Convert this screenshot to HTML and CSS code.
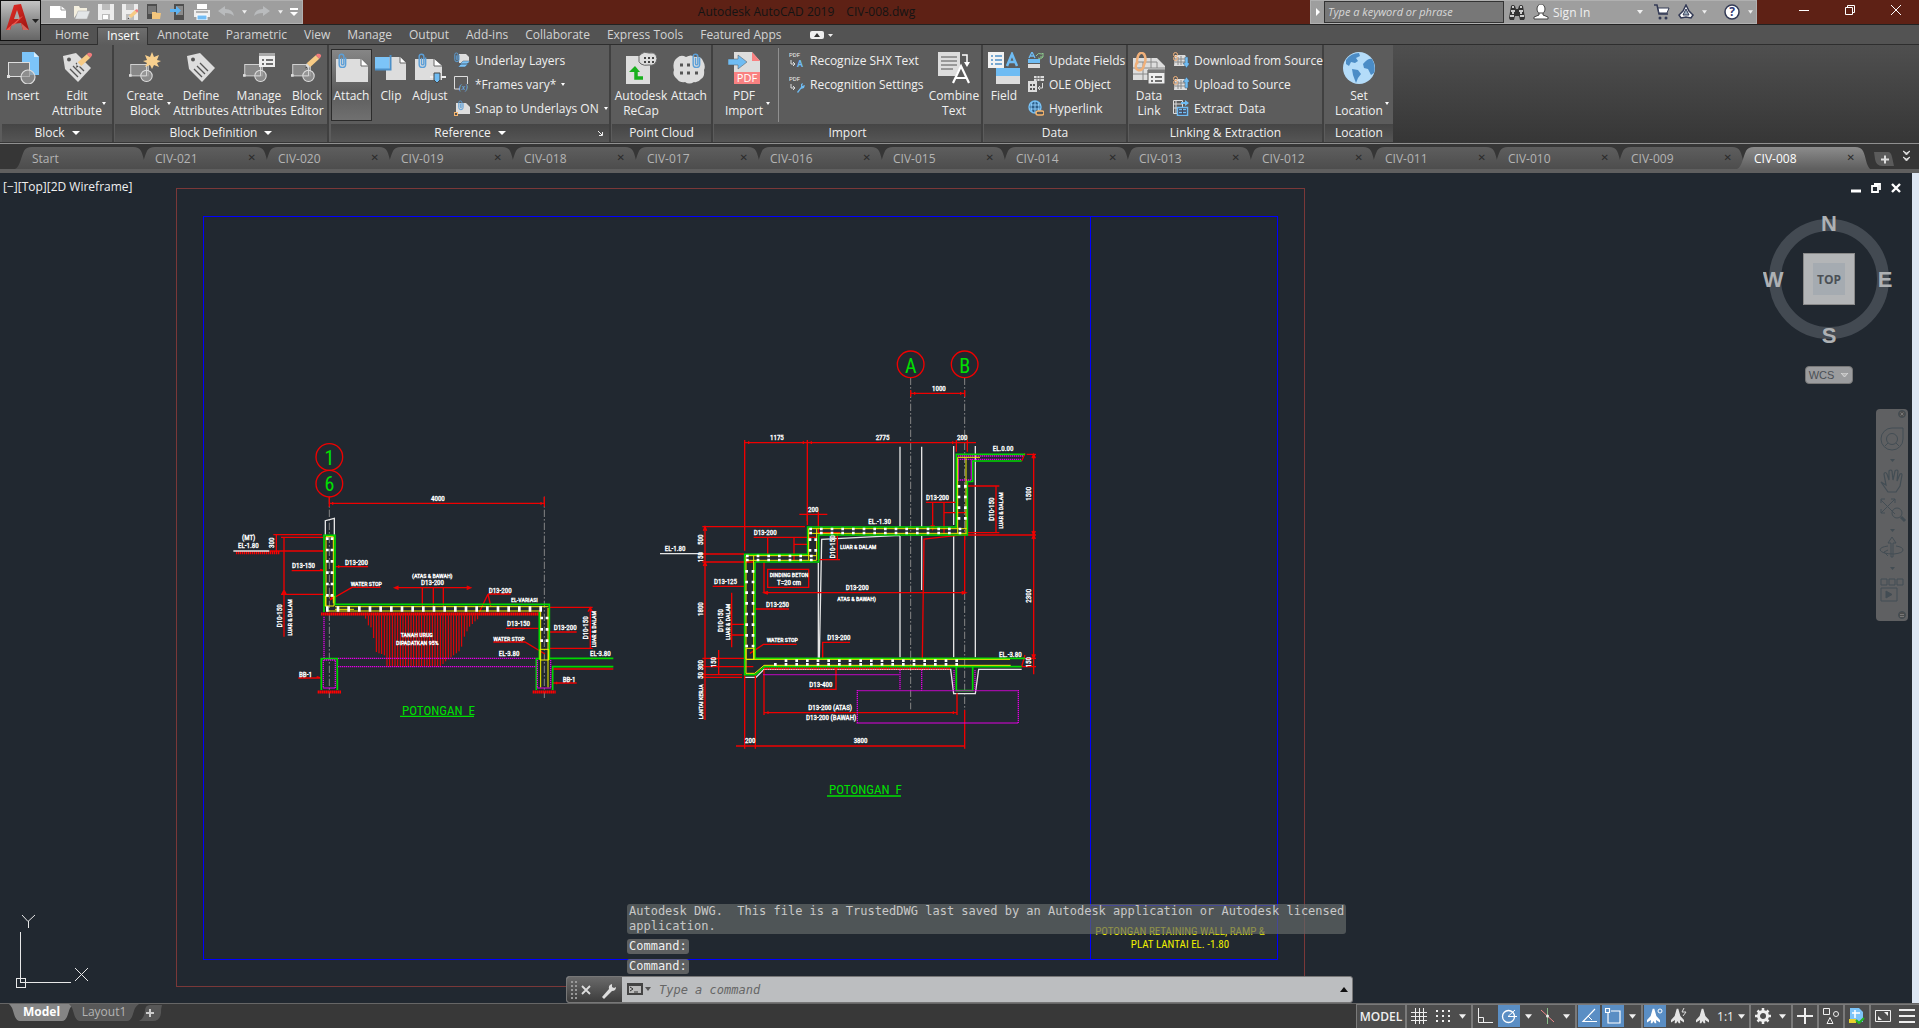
FILE: index.html
```html
<!DOCTYPE html>
<html lang="en">
<head>
<meta charset="utf-8">
<title>Autodesk AutoCAD 2019 - CIV-008.dwg</title>
<link rel="stylesheet" href="styles.css">
</head>
<body>
<svg class="defs" aria-hidden="true">
  <defs>
    <linearGradient id="g-red" x1="0" y1="0" x2="1" y2="1"><stop offset="0" stop-color="#e8302a"/><stop offset="1" stop-color="#9c1410"/></linearGradient>
    <symbol id="clip" viewBox="0 0 10 18"><path d="M8.500 5v7.500a3.600 3.600 0 0 1-7.200 0V4a2.600 2.600 0 0 1 5.200 0v8a1.300 1.300 0 0 1-2.600 0V5.500" fill="none" stroke="#5b9fd8" stroke-width="1.600"/></symbol>
    <symbol id="blk" viewBox="0 0 32 32"><rect x="2" y="12" width="20" height="13" fill="#888" stroke="#ddd"/><rect y="23" width="3" height="3" fill="#ddd"/><circle cx="20" cy="25" r="6.500" fill="#999" fill-opacity=".8" stroke="#ddd" stroke-width="1.200"/><path d="M20 12v13h-6" fill="none" stroke="#ddd"/></symbol>
    <symbol id="pencil" viewBox="0 0 20 18"><path d="M1 17l2-6 4 4z" fill="#ddd"/><path d="M3 11L13 2l4 4L7 15z" fill="#f7cb85"/><path d="M13 2l2-1.500q3-.5 4 1.500.5 1.500-2 4z" fill="#f17c7c"/><path d="M1 17l1-3 2 2z" fill="#444"/></symbol>
    <symbol id="tag" viewBox="0 0 32 32"><path d="M2 4l13-3 15 15-13 14L4 17z" fill="#ddd"/><circle cx="8" cy="7.500" r="2" fill="#555"/><path d="M9 17l8 8M12 14l8 8M15 11l8 8" stroke="#555" stroke-width="1.300"/></symbol>
    <symbol id="caret" viewBox="0 0 6 4"><path d="M0 0h6L3 4z" fill="currentColor"/></symbol>
    <symbol id="tree" viewBox="0 0 16 18"><path d="M7 0h2l2.500 9L16 14v3l-5-3 .5 4H9.500L8 15l-1.500 3H4.500L5 14l-5 3v-3l4.500-5z" fill="#fff"/></symbol>
  </defs>
</svg>

<header class="titlebar">
  <button class="app-button" aria-label="Application menu">
    <svg width="40" height="40" viewBox="0 0 40 40"><path d="M5 29L13 4l7-1 8 26h-6l-2-7-9 1-2 6z" fill="url(#g-red)"/><path d="M13 18l3-9 3 9z" fill="#a9a9a9"/><path d="M5 29l15-13 2-1-9 9-3 1-1 4z" fill="#f0594f"/><path d="M20 22l8 7h-6z" fill="#d2655c"/><path d="M31 18h7l-3.500 4z" fill="#222"/></svg>
  </button>
  <div class="quick">
    <button class="q" aria-label="New"><svg width="16" height="16"><path d="M0 2h11l5 4v8H0z" fill="#fff"/><path d="M11 2v4h5" fill="none" stroke="#999"/></svg></button>
    <button class="q" aria-label="Open"><svg width="16" height="16"><path d="M0 14V2h5l1 2h7v3H5z" fill="#f4efdf"/><path d="M4 7h12l-3 8H1z" fill="#e3e6e8" stroke="#aaa" stroke-width=".5"/></svg></button>
    <button class="q" aria-label="Save"><svg width="16" height="16"><path d="M0 0h16v16H0z" fill="#ececec"/><path d="M4 0h8v6H4zM4 10h8v6H4z" fill="#bcbcbc"/><path d="M5 11h5v4H5z" fill="#fff"/></svg></button>
    <button class="q" aria-label="Save as"><svg width="16" height="16"><path d="M0 0h16v16H0z" fill="#ececec"/><path d="M4 0h8v6H4zM4 10h8v6H4z" fill="#bcbcbc"/><use href="#pencil" x="5" y="5" width="12" height="11"/></svg></button>
    <button class="q" aria-label="Open from mobile"><svg width="16" height="16"><rect x="1" width="10" height="15" fill="#4e4e4e"/><path d="M2 2h8v8H2z" fill="#777"/><path d="M6 15V8h4l1 1h4l-1 6z" fill="#f3c57c"/></svg></button>
    <button class="q" aria-label="Save to mobile"><svg width="16" height="16"><rect x="4" width="10" height="16" fill="#4e4e4e"/><path d="M6 2h7v9H6z" fill="#8a8a8a"/><path d="M0 5h6V2l5 4.500L6 11V8H0z" fill="#5cb4f4"/></svg></button>
    <button class="q" aria-label="Plot"><svg width="16" height="16"><path d="M3 0h10v5H3z" fill="#fff"/><path d="M0 6h16v7H0z" fill="#eee"/><path d="M2 8h12" stroke="#777"/><path d="M3 11h10v5H3z" fill="#73bdf5" stroke="#fff"/></svg></button>
    <button class="q" aria-label="Undo"><svg width="16" height="16"><path d="M0 7l7-5v3q8 0 9 7-3-3-9-3v3z" fill="#b9bbbd"/></svg></button>
    <button class="c" aria-label="Undo list"><svg width="5" height="4"><use href="#caret" width="5" height="4"/></svg></button>
    <button class="q" aria-label="Redo"><svg width="16" height="16"><path d="M16 7L9 2v3Q1 5 0 12q3-3 9-3v3z" fill="#b9bbbd"/></svg></button>
    <button class="c" aria-label="Redo list"><svg width="5" height="4"><use href="#caret" width="5" height="4"/></svg></button>
    <button class="c last" aria-label="Customize"><svg width="8" height="8"><path d="M0 0h8v2H0zM0 4h8L4 8z" fill="#fff"/></svg></button>
  </div>
  <div class="title"><span>Autodesk AutoCAD 2019</span><span>CIV-008.dwg</span></div>
  <div class="info">
    <button class="info-arrow" aria-label="Collapse search"><svg width="4" height="8"><path d="M0 0l4 4-4 4z" fill="#fff"/></svg></button>
    <input class="search" type="text" placeholder="Type a keyword or phrase" aria-label="Search">
    <button class="q" aria-label="Find"><svg width="16" height="16"><path d="M2 2q2-2 4 0l1 3h2l1-3q2-2 4 0l2 12-1 2h-4l-1-4H6l-1 4H1l-1-2z" fill="#333"/><path d="M3 3h2M2 7h4M1 12h4M11 3h2M10 7h4M11 12h4M3 9h2M11 9h2" stroke="#fff" stroke-width="1.500"/></svg></button>
    <button class="q" aria-label="Account"><svg width="16" height="16"><ellipse cx="8" cy="5" rx="4" ry="5" fill="#fff" stroke="#444"/><path d="M6 9h4v2l5 2v2H1v-2l5-2z" fill="#fff" stroke="#444"/></svg></button>
    <button class="signin">Sign In <svg width="6" height="4"><use href="#caret" width="6" height="4"/></svg></button>
    <button class="q" aria-label="App store"><svg width="16" height="16"><path d="M0 1h3l2 9h9" fill="none" stroke="#333a55" stroke-width="1.500"/><path d="M4 4h11l-2 5H5z" fill="#fff" stroke="#333a55"/><circle cx="6" cy="14" r="1.500" fill="#333a55"/><circle cx="12" cy="14" r="1.500" fill="#333a55"/></svg></button>
    <button class="q" aria-label="Autodesk A360"><svg width="16" height="16"><path d="M8 1l3 6 4 4-2 3-5-1-5 1-2-3 4-4z" fill="#fff" stroke="#333a55" stroke-width="1.500"/><path d="M8 5l3 6H5z" fill="#9ab" stroke="#333a55"/></svg></button>
    <button class="c" aria-label="A360 list"><svg width="5" height="4"><use href="#caret" width="5" height="4"/></svg></button>
    <button class="q help" aria-label="Help"><svg width="16" height="16"><circle cx="8" cy="8" r="7" fill="#fff" stroke="#333a55" stroke-width="1.500"/><text x="8" y="12" text-anchor="middle" class="help-mark">?</text></svg></button>
    <button class="c" aria-label="Help list"><svg width="5" height="4"><use href="#caret" width="5" height="4"/></svg></button>
  </div>
  <div class="win">
    <button aria-label="Minimize"><svg width="10" height="10"><path d="M0 5.500h10" stroke="#fff"/></svg></button>
    <button aria-label="Restore"><svg width="10" height="10"><path d="M.5 2.500h7v7h-7zM2.500 2.500v-2h7v7h-2" fill="none" stroke="#fff"/></svg></button>
    <button aria-label="Close"><svg width="10" height="10"><path d="M0 0l10 10M10 0L0 10" stroke="#fff"/></svg></button>
  </div>
</header>

<nav class="menu">
  <a href="#home">Home</a><a href="#insert" class="active">Insert</a><a href="#annotate">Annotate</a><a href="#parametric">Parametric</a><a href="#view">View</a><a href="#manage">Manage</a><a href="#output">Output</a><a href="#addins">Add-ins</a><a href="#collaborate">Collaborate</a><a href="#express">Express Tools</a><a href="#featured">Featured Apps</a>
  <button class="menu-toggle" aria-label="Minimize ribbon"><svg width="23" height="8"><rect width="14" height="8" rx="2" fill="#eee"/><path d="M4 6h6L7 2z" fill="#333"/><path d="M18 3h5l-2.500 3z" fill="#eee"/></svg></button>
</nav>

<main class="ribbon">
  <section class="panel p-block">
    <div class="tools">
      <button class="big w42"><svg width="32" height="32"><path d="M15 0h12l5 5v18H15z" fill="#7cc4f8"/><path d="M27 0v5h5" fill="#d8eefc"/><rect x="1.500" y="10.500" width="21" height="14" fill="#777" stroke="#ddd"/><rect y="23" width="3" height="3" fill="#ddd"/><circle cx="21" cy="25" r="7" fill="#999" stroke="#ddd" stroke-width="1.200" fill-opacity=".7"/></svg><span>Insert</span></button>
      <button class="big w66"><svg width="32" height="32"><use href="#tag" width="32" height="32"/><use href="#pencil" x="14" y="0" width="18" height="17"/></svg><span>Edit<br>Attribute</span><i class="drop"></i></button>
    </div>
    <h2>Block <i class="tri"></i></h2>
  </section>
  <section class="panel p-def">
    <div class="tools">
      <button class="big w60"><svg width="32" height="32"><use href="#blk" width="28" height="32"/><path d="M23 0l2 5 5-2-2 5 4 1-4 2 2 4-5-2-2 4-2-4-5 2 2-4-4-2 4-1-2-5 5 2z" fill="#f8d08e"/></svg><span>Create<br>Block</span><i class="drop"></i></button>
      <button class="big w52"><svg width="32" height="32"><use href="#tag" width="32" height="32"/></svg><span>Define<br>Attributes</span></button>
      <button class="big w64"><svg width="32" height="32"><use href="#blk" width="28" height="32"/><path d="M16 1h16v14H16z" fill="#eee"/><path d="M16 1h16v3H16z" fill="#a8a8a8"/><path d="M19 8h2M23 8h7M19 12h2M23 12h7" stroke="#444" stroke-width="1.500"/></svg><span>Manage<br>Attributes</span></button>
      <button class="big w32"><svg width="32" height="32"><use href="#blk" width="28" height="32"/><use href="#pencil" x="13" y="1" width="18" height="17"/></svg><span>Block<br>Editor</span></button>
    </div>
    <h2>Block Definition <i class="tri"></i></h2>
  </section>
  <section class="panel p-ref">
    <div class="tools">
      <button class="big w41 pressed"><svg width="32" height="32"><path d="M0 7h25l7 7v16H0z" fill="#ddd"/><path d="M25 7v7h7" fill="#fff" stroke="#666"/><use href="#clip" x="2" y="0" width="9" height="18"/></svg><span>Attach</span></button>
      <button class="big w38"><svg width="32" height="32"><path d="M11 5h14l6 6v17H11z" fill="#ddd"/><path d="M25 5v6h6" fill="#fff" stroke="#666"/><path d="M0 5h14v12H0z" fill="#7cc4f8"/><path d="M0 17.500h15.500V3" fill="none" stroke="#4c90c8" stroke-width="2"/></svg><span>Clip</span></button>
      <button class="big w40"><svg width="32" height="32"><path d="M1 7h19l8 7v14H1z" fill="#ddd"/><path d="M20 7v7h8" fill="#fff" stroke="#666"/><use href="#clip" x="4" y="0" width="9" height="18"/><path d="M16 25h16" stroke="#eee" stroke-width="2"/><path d="M20 21h6v7l-3 3-3-3z" fill="#6fbcf3" stroke="#444"/></svg><span>Adjust</span></button>
      <div class="list pad4">
        <button><svg width="16" height="16"><path d="M5 2h7l3 3v6H5z" fill="#ddd"/><use href="#clip" width="6" height="11"/><path d="M6 12l3-3h7l-3 3zM4 15l3-3h7l-3 3z" fill="#7cc4f8" stroke="#456" stroke-width=".5"/></svg>Underlay Layers</button>
        <button><svg width="16" height="16"><path d="M.5 13V.5h13V8M.5 13H6" fill="none" stroke="#ddd"/><text x="5" y="14" class="ic-x">(x)</text></svg>*Frames vary* <i class="drop"></i></button>
        <button><svg width="16" height="16"><path d="M2 3h10l4 4v7H2z" fill="#ddd"/><use href="#clip" x="4" y="0" width="6" height="11"/><rect x=".5" y="12.500" width="3" height="3" fill="#555" stroke="#f7b56c"/></svg>Snap to Underlays ON <i class="drop"></i></button>
      </div>
    </div>
    <h2>Reference <i class="tri"></i><svg class="launcher" width="5" height="5"><path d="M0 0l4 4M4.500 1v3.500H1" fill="none" stroke="#eee"/></svg></h2>
  </section>
  <section class="panel p-pc">
    <div class="tools">
      <button class="big w58"><svg width="32" height="32"><path d="M1 4h24v28H1z" fill="#ddd"/><path d="M16 2q3-3 8-1 5-1 7 2 2 4 0 7-2 4-7 3-5 1-8-1-3-2-2-5-1-3 2-5z" fill="#ddd" stroke="#666"/><path d="M19 6h2M23 6h2M27 6h2M19 10h2M23 10h2M27 10h2" stroke="#444" stroke-width="2"/><path d="M18 26h-7v-8" fill="none" stroke="#18b01c" stroke-width="3.500"/><path d="M4 20l6-6 5 6z" fill="#18b01c"/></svg><span>Autodesk<br>ReCap</span></button>
      <button class="big w38"><svg width="32" height="32"><path d="M4 6q4-4 9-1 5-3 9 0 6-1 8 4 3 5 1 9 1 7-3 9-3 4-7 3-5 3-9 0-5 1-8-3-5-4-3-9-2-8 3-12z" fill="#ddd"/><path d="M7 13h3M14 13h3M7 21h3M14 21h3M22 21h3" stroke="#555" stroke-width="3"/><use href="#clip" x="19" y="0" width="9" height="18"/></svg><span>Attach</span></button>
    </div>
    <h2>Point Cloud</h2>
  </section>
  <section class="panel p-imp">
    <div class="tools">
      <button class="big w60"><svg width="32" height="32"><path d="M6 0h18l8 9v12H6z" fill="#ddd"/><path d="M24 0v9h8z" fill="#f98181"/><path d="M6 20h26v12H6z" fill="#f98181"/><text x="19" y="30" text-anchor="middle" class="ic-pdf">PDF</text><path d="M0 7h10V3l9 7-9 7v-4H0z" fill="#6fbcf3" stroke="#555" stroke-width=".5"/></svg><span>PDF<br>Import</span><i class="drop"></i></button>
      <div class="rule"></div>
      <div class="list">
        <button><svg width="16" height="18" viewBox="0 -2 16 18"><text x="0" y="4" class="ic-t">PDF</text><path d="M2 7v4h4M4 9l2 2-2 2" fill="none" stroke="#ddd"/><text x="8" y="14" class="ic-a">A</text></svg>Recognize SHX Text</button>
        <button><svg width="16" height="18" viewBox="0 -2 16 18"><text x="0" y="4" class="ic-t">PDF</text><path d="M2 7v4h4M4 9l2 2-2 2" fill="none" stroke="#ddd"/><path d="M8 15l4-5V7l2-1-1 3 3-1-1 3-3 1-3 4z" fill="#6fbcf3"/></svg>Recognition Settings</button>
      </div>
      <button class="big w54 end"><svg width="32" height="32"><path d="M0 0h22v24H0z" fill="#ddd"/><path d="M3 5h16M3 9h16M3 13h16M3 17h12" stroke="#555"/><path d="M24 3h5v8" fill="none" stroke="#fff" stroke-width="1.500"/><path d="M26 10h6l-3 5z" fill="#fff"/><path d="M13 33l10-20 10 20v-1H13z" fill="#5c5c5c"/><path d="M15 31l8-17 8 17M18 26h10" fill="none" stroke="#fff" stroke-width="2.200"/></svg><span>Combine<br>Text</span></button>
    </div>
    <h2>Import</h2>
  </section>
  <section class="panel p-data">
    <div class="tools">
      <button class="big w40"><svg width="32" height="32"><path d="M0 0h16v16H0z" fill="#f2f2f2"/><path d="M3 4h2M3 8h2M3 12h2M7 4h7M7 8h7M7 12h7" stroke="#4d90c8" stroke-width="1.500"/><path d="M8 16h24v8H8z" fill="#6fbcf3"/><path d="M8 24h24v8H8z" fill="#ddd"/><path d="M19 14l5-12 5 12M21 10h7" fill="none" stroke="#6fbcf3" stroke-width="2.500"/></svg><span>Field</span></button>
      <div class="list pad4">
        <button><svg width="16" height="16"><path d="M0 7h12v4H0z" fill="#6fbcf3"/><path d="M0 12h12v4H0z" fill="#ddd"/><path d="M1 6l3-6 3 6M2 4h4" fill="none" stroke="#6fbcf3" stroke-width="1.300"/><path d="M8 4q2-4 6-2l1-1v4h-3M15 5q-2 3-5 1" fill="none" stroke="#8cc98c"/></svg>Update Fields</button>
        <button><svg width="16" height="16"><path d="M0 5h9v11H0zM6 0h10v5H6z" fill="#ddd"/><path d="M2 8h2v2H2zM5 8h2v2H5zM2 12h2v2H2zM5 12h2v2H5z" fill="#555"/><path d="M6 2.500h10M9 0v5M12 0v5" stroke="#777"/><path d="M14.500 7v5H11M12 10l-2 2 2 2" fill="none" stroke="#ddd"/></svg>OLE Object</button>
        <button><svg width="16" height="16"><circle cx="7" cy="7" r="6" fill="#2c5d88" stroke="#6fbcf3" stroke-width="1.500"/><path d="M1 5h12M1 9h12M7 1v12M4 2q-2 5 0 10M10 2q2 5 0 10" fill="none" stroke="#8ccbf8"/><rect x="8" y="11" width="8" height="4" rx="2" fill="#555" stroke="#f7b56c" stroke-width="1.500"/></svg>Hyperlink</button>
      </div>
    </div>
    <h2>Data</h2>
  </section>
  <section class="panel p-link">
    <div class="tools">
      <button class="big w40"><svg width="32" height="32"><path d="M0 6h24l8 8v14H0z" fill="#ddd"/><path d="M4 10h20M0 16h32M0 22h16M10 10v18M18 6v10M24 10v6" stroke="#888"/><path d="M15 18h17v14H15z" fill="#eee" stroke="#555"/><path d="M15 18h17v3H15z" fill="#777"/><path d="M18 25h2M22 25h7M18 29h2M22 29h7" stroke="#444" stroke-width="1.500"/><path d="M4 10q-3 6 1 8 5 1 6-5 3-6 0-11-4-3-6 2-2 6 0 8" fill="none" stroke="#f0b07a" stroke-width="2.500"/></svg><span>Data<br>Link</span></button>
      <div class="list pad4">
        <button><svg width="16" height="16"><path d="M2 3h10l2 3v8H1z" fill="#ddd"/><path d="M2 7h10M2 10h10M5 5v8M8 4v9" stroke="#888"/><circle cx="2.500" cy="2.500" r="2" fill="none" stroke="#f0b07a"/><circle cx="2.500" cy="6.500" r="2" fill="none" stroke="#f0b07a"/><path d="M12 5h3v6h2l-3.500 5L10 11h2z" fill="#6fbcf3" stroke="#456" stroke-width=".5"/></svg>Download from Source</button>
        <button><svg width="16" height="16"><path d="M2 3h10l2 3v8H1z" fill="#ddd"/><path d="M2 7h10M2 10h10M5 5v8M8 4v9" stroke="#888"/><circle cx="2.500" cy="2.500" r="2" fill="none" stroke="#f0b07a"/><circle cx="2.500" cy="6.500" r="2" fill="none" stroke="#f0b07a"/><path d="M12 12h3V6h2l-3.500-5L10 6h2z" fill="#6fbcf3" stroke="#456" stroke-width=".5"/></svg>Upload to Source</button>
        <button><svg width="16" height="16"><path d="M.5.500h9v13h-9z" fill="none" stroke="#ddd"/><path d="M0 4h9M0 8h5M3 0v14" stroke="#ddd"/><path d="M8 2h4V0l4 3-4 3V4H8z" fill="#6fbcf3"/><path d="M4.500 7.500h10v8h-10z" fill="#445" stroke="#6fbcf3" stroke-width="1.500"/><path d="M6 9.500h7M6 12.500h7" stroke="#6fbcf3" stroke-width="1.500" stroke-dasharray="3 1"/></svg>Extract&nbsp; Data</button>
      </div>
    </div>
    <h2>Linking &amp; Extraction</h2>
  </section>
  <section class="panel p-loc">
    <div class="tools">
      <button class="big w68"><svg width="32" height="32"><circle cx="16" cy="16" r="16" fill="#b4dcf9"/><path d="M3 8q5-7 13-7l1 3-4 2 2 3-3 2-4-1-2 4-3-2zM20 12q5-6 9-5 4 6 2 14l-3 2-3-6-4-1zM9 17l6 1 3 4-3 4-2 5-3-8z" fill="#4b8cc6"/></svg><span>Set<br>Location</span><i class="drop"></i></button>
    </div>
    <h2>Location</h2>
  </section>
</main>

<nav class="files">
  <a href="#start" class="first">Start</a>
  <a href="#f21">CIV-021<b>✕</b></a><a href="#f20">CIV-020<b>✕</b></a><a href="#f19">CIV-019<b>✕</b></a><a href="#f18">CIV-018<b>✕</b></a><a href="#f17">CIV-017<b>✕</b></a><a href="#f16">CIV-016<b>✕</b></a><a href="#f15">CIV-015<b>✕</b></a><a href="#f14">CIV-014<b>✕</b></a><a href="#f13">CIV-013<b>✕</b></a><a href="#f12">CIV-012<b>✕</b></a><a href="#f11">CIV-011<b>✕</b></a><a href="#f10">CIV-010<b>✕</b></a><a href="#f09">CIV-009<b>✕</b></a><a href="#f08" class="current">CIV-008<b>✕</b></a>
  <button class="new-file" aria-label="New drawing"><svg width="20" height="14"><path d="M0 0h14q3 0 4 5l2 9H8q-6 0-7-7z" fill="#5b5b5b"/><path d="M7 7.500h8M11 3.500v8" stroke="#ddd" stroke-width="2"/></svg></button>
  <button class="overflow" aria-label="More drawings"><svg width="7" height="12"><path d="M0 1l3.500 2L7 1 3.500 5zM0 7l3.500 2L7 7l-3.500 4z" fill="#ddd" stroke="#ddd"/></svg></button>
</nav>

<div class="workspace">
  <div class="viewport">
    <svg class="drawing" width="1912" height="830" viewBox="0 173 1912 830">
      <g fill="none" shape-rendering="crispEdges">
        <rect x="176.500" y="188.500" width="1128" height="798" stroke="#7a3838"/>
        <path d="M203.500 216.500h1074v743h-1074zM1090.500 216v743M1090 905.500h188" stroke="#0000ff"/>
      </g>
      <g class="sheet-title"><text x="1180" y="935">POTONGAN RETAINING WALL, RAMP &amp;</text><text x="1180" y="948">PLAT LANTAI EL. -1.80</text></g>
      <g fill="none" stroke="#e8e8e8"><path d="M20.500 932v50.500H71M16.500 978.500h9v9h-9z" shape-rendering="crispEdges"/><path d="M22 915l6 6.500 7-6.500M28.500 921v7M75 968l13 13M88 968l-13 13"/></g>

      <svg x="220" y="430" width="400" height="300" viewBox="0 0 1200 900">
        <g class="gray"><path d="M328 200V804M973 200V804" stroke-dasharray="22 6 5 6"/></g>
        <g class="red">
          <circle cx="328" cy="81" r="40"/><circle cx="328" cy="161" r="40"/>
          <path d="M328 220H973M328 200v30M973 200v30M338 216v8M963 216v8"/>
          <path d="M160 314H306M169 314V362M150 363H310M183 322H310M192 322V620M183 493H312M192 480l-6 12h12z"/>
          <path d="M215 422H312M300 418l12 4M345 410H444M356 406v8M396 472H482M396 472L330 510M330 510l10-14"/>
          <path d="M524 473H752M536 468l-12 5 12 5M740 468l12 5-12 5M607 473V528M640 473V528M670 473V528M804 492H872M804 492L778 547M804 492L812 528"/>
          <path d="M988 532H1118M1111 532V656M988 655H1118M1104 545l7-12 6 12"/><path d="M858 595H955M990 606H1070M820 636H915L975 672"/>
          <path d="M235 744H302M290 740l12 4M998 759H1070M1010 755v8M998 717H1180"/>
        </g>
        <g fill="none" stroke="#f00"><path d="M48 368H180" stroke-width="10" stroke-dasharray="4 2"/><path d="M303 552H962M293 786H363M938 786H1007" stroke-width="9" stroke-dasharray="5 1"/>
        <path stroke-width="3" d="M437 556V566M445 556V586M453 556V592M461 556V624M469 556V666M477 556V670M485 556V672M493 556V676M501 556V710M509 556V710M517 556V710M525 556V710M533 556V710M541 556V710M549 556V710M557 556V710M565 556V710M573 556V710M581 556V710M589 556V710M597 556V710M605 556V710M613 556V710M621 556V710M629 556V710M637 556V710M645 556V710M653 556V710M661 556V710M669 556V702M677 556V694M685 556V688M693 556V682M701 556V676M709 556V670M717 556V664M725 556V650M733 556V620M741 556V604M749 556V590M757 556V582M765 556V574M773 556V568"/></g>
        <g class="white"><path d="M316 314V272L343 265V314M40 363H148"/></g>
        <g class="green"><path d="M312 546V316H345V523H988V690M958 546V684M304 780V686H352V780M949 780V686H962M1180 685H988M1180 710H998V780"/></g>
        <g class="mag"><path d="M312 560V684M354 685H946M354 710H946M310 690V774H346V690ZM952 690V774H992V690"/></g>
        <g class="yel"><path d="M318 320H340V520M318 320V530M316 498H342V528H316ZM320 543H960M345 530H985M345 538H402M962 534V772M984 534V772M960 658H986V690H960Z"/></g>
        <g class="bars"><path d="M322 322V500M336 322V500M965 560V650M981 560V650" stroke-dasharray="8 26"/><path d="M318 533H985M318 541H985" stroke-dasharray="8 24"/></g>
        <g class="cad"><text x="633" y="212">4000</text><text x="66" y="331">(MT)</text><text x="54" y="354">EL-1.80</text><text x="216" y="415">D13-150</text><text x="375" y="404">D13-200</text><text x="603" y="465">D13-200</text><text x="806" y="488">D13-200</text><text x="861" y="588">D13-150</text><text x="1001" y="600">D13-200</text><text x="836" y="679">EL-3.80</text><text x="1110" y="679">EL-3.80</text><text x="237" y="741">BB-1</text><text x="1028" y="755">BB-1</text>
        <text transform="translate(161 354) rotate(-90)">300</text><text transform="translate(186 592) rotate(-90)">D10-150</text><text transform="translate(1104 628) rotate(-90)">D10-150</text></g>
        <g class="cad words"><text x="392" y="467">WATER STOP</text><text x="576" y="443">(ATAS &amp; BAWAH)</text><text x="873" y="517">EL-VARIASI</text><text x="542" y="621">TANAH URUG</text><text x="528" y="645">DIPADATKAN 95%</text><text x="820" y="634">WATER STOP</text><text transform="translate(215 617) rotate(-90)">LUAR &amp; DALAM</text><text transform="translate(1129 652) rotate(-90)">LUAR &amp; DALAM</text></g>
        <g class="cad-title"><text x="546" y="854">POTONGAN&nbsp; E</text><path d="M540 859H762"/></g>
        <g class="axis"><text x="328" y="104">1</text><text x="328" y="184">6</text></g>
      </svg>

      <svg x="640" y="340" width="420" height="470" viewBox="0 0 1260 1410">
        <g class="gray"><path d="M812 113V1108M974 113V600M974 758V1110" stroke-dasharray="22 6 5 6"/></g>
        <g class="white"><path d="M780 320V560M845 320V560M941 318V555M780 588V952M845 588V750M941 588V952M1006 318V952M60 641H187M535 668V955M538 955L545 598L780 586M315 1012H348L372 988H932L941 1061H1006L1016 988H1145"/></g>
        <g class="red">
          <circle cx="812" cy="73" r="40"/><circle cx="974" cy="73" r="40"/>
          <path d="M812 160H974M812 150v20M974 150v20M824 156v8M962 156v8M314 308H1008M314 300V632M502 300V555M949 300V335M982 300V335M326 304v8M490 304v8M514 304v8M938 304v8"/>
          <path d="M1181 343V1003M1160 343H1188M984 585H1188M1150 955H1188M1145 980H1188M1176 355l5-12 5 12M1176 573l5 12 5-12M1176 597l5-12 5 12M1176 943l5 12 5-12"/>
          <path d="M1068 438V578M984 438H1078M984 578H1078M858 487H952M878 487V570M912 487V582M912 518H978M873 556l5 12 5-12M478 523H562M535 515V580M502 523v20"/>
          <path d="M195 560V1140M187 560H495M187 642H312M187 666H340M187 955H312M187 980H340M187 1004H306M187 1012H306M236 930V1003M190 572l5-12 5 12M190 678l5-12 5 12"/>
          <path d="M341 592H530M383 592V645M462 592V660M462 613H505M592 578V660M535 578H600M535 659H600M980 583L852 597L847 955M383 688H506V742H383Z"/>
          <path d="M218 739H316M345 807H447M275 758V922M275 853H320M275 885H320M372 666V760M372 758H977M384 754l-12 4 12 4M965 754l12 4-12 4M470 913H370L330 940M548 955V907H630M508 1048H588V978"/>
          <path d="M372 990V1125M951 1060V1125M372 1118H951M384 1114v8M940 1114v8M288 1218H974M314 1004V1226M346 1004V1226M974 1110V1226M974 580V758M1155 340L1145 363M1155 945L1145 980"/>
        </g>
        <path d="M372 985H930" fill="none" stroke="#f00" stroke-width="7" stroke-dasharray="5 2"/>
        <g class="green"><path d="M1155 343H949V561H503V643H314V1004H346L374 980H1145M1145 363H998V424H982V585H536V666H345M345 666V955H1155M949 980V1052H998V980"/></g>
        <g class="mag"><path d="M953 348H1150M953 358H1145M955 358V420H994V358M370 1004H780V1050M780 990V1052M845 990V1052M652 1052H1135V1149H652ZM942 990V1050M1005 990V1050"/></g>
        <g class="yel"><path d="M953 352H1020M953 352V580M978 355V580M506 566H980M506 580H980M506 566V660M530 566V660M318 647H530M318 661H530M318 647V1000H344L372 976H1112M341 647V958M320 958H1110M318 925H342V958H318Z"/></g>
        <g class="bars"><path d="M508 567H980M508 579H980M318 648H530M318 660H530M434 962H955M402 973H955" stroke-dasharray="8 24"/><path d="M957 435V550M976 435V550M510 595V640M527 595V640M320 690V930M339 690V930" stroke-dasharray="8 24"/></g>
        <g class="cad"><text x="876" y="152">1000</text><text x="390" y="300">1175</text><text x="707" y="300">2775</text><text x="951" y="300">200</text><text x="1058" y="332">EL.0.00</text><text x="858" y="480">D13-200</text><text x="685" y="552">EL.-1.30</text><text x="504" y="515">200</text><text x="74" y="634">EL-1.80</text><text x="341" y="586">D13-200</text><text x="411" y="735">T=20 cm</text><text x="222" y="732">D13-125</text><text x="378" y="801">D13-250</text><text x="617" y="751">D13-200</text><text x="562" y="900">D13-200</text><text x="508" y="1042">D13-400</text><text x="505" y="1109">D13-200 (ATAS)</text><text x="498" y="1141">D13-200 (BAWAH)</text><text x="1077" y="950">EL.-3.80</text><text x="315" y="1210">200</text><text x="641" y="1210">3800</text>
        <text transform="translate(1172 482) rotate(-90)">1500</text><text transform="translate(1173 788) rotate(-90)">2300</text><text transform="translate(1173 982) rotate(-90)">150</text><text transform="translate(1061 542) rotate(-90)">D10-150</text><text transform="translate(188 615) rotate(-90)">500</text><text transform="translate(188 667) rotate(-90)">150</text><text transform="translate(189 828) rotate(-90)">1800</text><text transform="translate(188 991) rotate(-90)">300</text><text transform="translate(188 1017) rotate(-90)">50</text><text transform="translate(229 982) rotate(-90)">150</text><text transform="translate(585 655) rotate(-90)">D10-150</text><text transform="translate(249 876) rotate(-90)">D10-150</text></g>
        <g class="cad words"><text x="600" y="626">LUAR &amp; DALAM</text><text x="389" y="711">DINDING BETON</text><text x="592" y="783">ATAS &amp; BAWAH)</text><text x="380" y="907">WATER STOP</text><text transform="translate(1090 566) rotate(-90)">LUAR &amp; DALAM</text><text transform="translate(188 1138) rotate(-90)">LANTAI KERJA</text><text transform="translate(270 900) rotate(-90)">LUAR &amp; DALAM</text></g>
        <g class="cad-title"><text x="567" y="1362">POTONGAN&nbsp; F</text><path d="M561 1368H783"/></g>
        <g class="axis"><text x="812" y="98">A</text><text x="974" y="98">B</text></g>
      </svg>
    </svg>

    <div class="view-label">[−][Top][2D Wireframe]</div>
    <div class="doc-win">
      <button aria-label="Minimize drawing"><svg width="10" height="10"><path d="M0 8h10" stroke="#fff" stroke-width="3"/></svg></button>
      <button aria-label="Restore drawing"><svg width="10" height="10"><path d="M1 3h6v6H1zM3 1h6v6" fill="none" stroke="#fff" stroke-width="1.800"/></svg></button>
      <button aria-label="Close drawing"><svg width="10" height="10"><path d="M1 1l8 8M9 1L1 9" stroke="#fff" stroke-width="2.400"/></svg></button>
    </div>
    <div class="cube">
      <svg width="132" height="144" viewBox="0 -6 132 144">
        <circle cx="66" cy="66" r="54" fill="none" stroke="#434a52" stroke-width="12"/>
        <rect x="40.500" y="40.500" width="51" height="51" fill="#b3b5b7" stroke="#8a8a8a"/><rect x="50" y="50" width="32" height="32" fill="#a5abb1"/>
        <text x="66" y="71" class="top">TOP</text>
        <g class="compass"><text x="66" y="18">N</text><text x="66" y="130">S</text><text x="10" y="74">W</text><text x="122" y="74">E</text></g>
      </svg>
      <button class="wcs">WCS <svg width="9" height="5"><path d="M1 0h7L4.500 4z" fill="#b5b5b5" stroke="#d5d5d5"/></svg></button>
    </div>
    <div class="navbar">
      <svg width="32" height="212" viewBox="0 0 32 212" fill="none" stroke="#434d54">
        <circle cx="26" cy="5" r="3.500" fill="#4c4c4c"/><path d="M24.500 3.500l3 3M27.500 3.500l-3 3" stroke="#777"/>
        <path d="M27 30a11 11 0 1 1-11-11h11z"/><circle cx="16" cy="30" r="5.500"/><path d="M12 34l-3 3M20 34l3 3"/>
        <path d="M14 50h5l-2.500 3zM14 120h5l-2.500 3zM14 158h5l-2.500 3z" fill="#434d54" stroke="none"/>
        <path d="M5 73l5 3-2-11q1-3 3 0l2 6V62q2-2 3 0l1 9 2-9q2-2 3 0l-1 10 3-7q2-1 2 1l-2 11-4 6h-8z" stroke-width="1.200"/>
        <path d="M5 91l14 14M19 90L5 104M5 94v-4h4M15 90h4v4M5 100v4h4"/><circle cx="21" cy="104" r="5"/><path d="M25 108l4 4" stroke-width="3"/>
        <path d="M15 148v-14h-3l4-6 4 6h-3v14z" /><path d="M12 137q-8 1-8 4 2 4 14 4 9-1 9-4 0-3-7-4M12 141l-4 2 4 4"/>
        <path d="M5 170h6v6H5zM13 170h6v6h-6zM21 170h6v6h-6zM5 179h16v13H5z"/><path d="M10 182v7l6-3.500z" fill="#434d54"/>
        <circle cx="26" cy="206" r="3.500" fill="#4c4c4c"/><path d="M24 205.500h4M24 207.500h4" stroke="#777"/>
      </svg>
    </div>
    <div class="command">
      <div class="history"><p class="dim">Autodesk DWG.&nbsp; This file is a TrustedDWG last saved by an Autodesk application or Autodesk licensed<br>application.</p><p>Command:</p><p>Command:</p></div>
      <div class="cmdline">
        <div class="grip"><svg width="55" height="27"><path d="M5 4v19M9 4v19" stroke="#999" stroke-width="2" stroke-dasharray="2 2"/><path d="M15 9l8 8M23 9l-8 8" stroke="#ddd" stroke-width="1.800"/><path d="M35 20l7-8q-1-4 3-5v3l2 1 2-1q0 4-4 4l-8 8z" fill="#ddd"/></svg></div>
        <label class="prompt" for="cmd"><svg width="24" height="13"><path d="M0 0h16v12H0z" fill="#444"/><path d="M2 3h12v7H2z" fill="#bbb"/><path d="M3 4l3 2-3 2M7 9h4" fill="none" stroke="#333"/><path d="M18 4h6l-3 4z" fill="#555"/></svg></label>
        <input id="cmd" type="text" placeholder="Type a command">
        <button aria-label="Recent commands"><svg width="8" height="5"><path d="M0 5h8L4 0z" fill="#111"/></svg></button>
      </div>
    </div>
  </div>
  <div class="edge"></div>
</div>

<footer class="status">
  <div class="layouts"><a href="#model" class="current">Model</a><a href="#layout1">Layout1</a><button aria-label="New layout"><svg width="23" height="16"><path d="M0 16Q5 14 6 6q0-6 5-6h12q-1 3-1 8-1 8-8 8z" fill="#575757"/><path d="M7 8h8M11 4v8" stroke="#ccc" stroke-width="2"/></svg></button></div>
  <div class="toggles">
    <div class="cell"><button class="model">MODEL</button></div>
    <div class="cell"><button class="t" aria-label="Grid"><svg width="16" height="16"><path d="M4.500 0v16M8.500 0v16M12.500 0v16M0 4.500h16M0 8.500h16M0 12.500h16" stroke="#eee"/></svg></button><button class="t" aria-label="Snap"><svg width="14" height="14"><path d="M0 2h14M0 7h14M0 12h14" stroke="#eee" stroke-width="2" stroke-dasharray="2 4"/></svg></button><button class="k" aria-label="Snap list"><svg width="7" height="5"><use href="#caret" width="7" height="5"/></svg></button></div>
    <div class="cell"><button class="t" aria-label="Ortho"><svg width="16" height="16"><path d="M1.500 0v14.500H16M1 9.500h5.500V14" fill="none" stroke="#eee"/></svg></button><button class="t on" aria-label="Polar"><svg width="16" height="16"><circle cx="7.500" cy="8.500" r="6" fill="none" stroke="#fff" stroke-width="1.300"/><path d="M7 8.500h9M7 8.500L14 2" stroke="#fff"/></svg></button><button class="k" aria-label="Polar list"><svg width="7" height="5"><use href="#caret" width="7" height="5"/></svg></button><button class="t" aria-label="Isometric"><svg width="16" height="16"><path d="M2 2l13 12" stroke="#e88"/><path d="M8.500 0v16" stroke="#8b8"/><circle cx="8.500" cy="8" r="1.500" fill="#eee"/></svg></button><button class="k" aria-label="Isometric list"><svg width="7" height="5"><use href="#caret" width="7" height="5"/></svg></button></div>
    <div class="cell"><button class="t on" aria-label="Tracking"><svg width="16" height="16"><path d="M14 1L2 13.500h14" fill="none" stroke="#fff" stroke-width="1.200"/><path d="M7 8l4 4" stroke="#fff"/></svg></button><button class="t on" aria-label="Object snap"><svg width="16" height="16"><path d="M3 5v10h12V3H6M.5.500h4v4h-4z" fill="none" stroke="#fff" stroke-width="1.200"/></svg></button><button class="k" aria-label="Snap modes"><svg width="7" height="5"><use href="#caret" width="7" height="5"/></svg></button></div>
    <div class="cell"><button class="t on" aria-label="Annotation visibility"><svg width="16" height="16"><use href="#tree" width="13" height="16"/><circle cx="13" cy="3" r="2" fill="none" stroke="#fff"/></svg></button><button class="t" aria-label="Auto scale"><svg width="16" height="16"><use href="#tree" width="13" height="16" opacity=".85"/><path d="M13 0l-2 4h4l-3 4" fill="none" stroke="#ddd"/></svg></button><button class="t" aria-label="Annotation scale"><svg width="16" height="16"><use href="#tree" x="1" width="13" height="16" opacity=".85"/></svg></button><button class="scale">1:1 <svg width="7" height="5"><use href="#caret" width="7" height="5"/></svg></button></div>
    <div class="cell"><button class="t" aria-label="Workspace"><svg width="16" height="16"><circle cx="8" cy="8" r="4.500" fill="none" stroke="#eee" stroke-width="3"/><path d="M8 0v3M8 13v3M0 8h3M13 8h3M2.500 2.500l2 2M11.500 11.500l2 2M2.500 13.500l2-2M11.500 4.500l2-2" stroke="#eee" stroke-width="2.500"/></svg></button><button class="k" aria-label="Workspace list"><svg width="7" height="5"><use href="#caret" width="7" height="5"/></svg></button></div>
    <div class="cell"><button class="t" aria-label="Annotation monitor"><svg width="16" height="16"><path d="M0 8h16M8 0v16" stroke="#eee" stroke-width="2"/></svg></button></div>
    <div class="cell"><button class="t" aria-label="Isolate"><svg width="16" height="16" fill="none" stroke="#eee"><path d="M.5.500h6v6h-6zM4 15.500h6L7 9.500z"/><circle cx="13" cy="6" r="2.500"/></svg></button></div>
    <div class="cell"><button class="t" aria-label="Performance"><svg width="16" height="16"><path d="M1 0h9l4 4v10H1z" fill="#7cc4f8"/><path d="M6 2v8M3 5h8" stroke="#fff" stroke-width="1.500"/><path d="M0 11h7v4H0z" fill="#e8d22c"/><path d="M7 12l3 3 5-5" fill="none" stroke="#25b425" stroke-width="2.200"/></svg></button></div>
    <div class="cell"><button class="t" aria-label="Clean screen"><svg width="16" height="14"><path d="M.5 1.500h15v11H.5z" fill="none" stroke="#eee"/><path d="M13 3v4L9 3zM3 11V7l4 4z" fill="#eee"/></svg></button><button class="t" aria-label="Customization"><svg width="16" height="14"><path d="M0 1h16M0 7h16M0 13h16" stroke="#eee" stroke-width="2"/></svg></button></div>
  </div>
</footer>
</body>
</html>
```
FILE: styles.css
```css
* { box-sizing: border-box; }

body {
  margin: 0;
  min-height: 100vh;
  display: flex;
  flex-direction: column;
  background: #383838;
  color: #f0f0f0;
  font: 12px/15px "Open Sans", "Noto Sans", sans-serif;
  overflow: hidden;
}

button {
  border: 0;
  padding: 0;
  margin: 0;
  background: none;
  color: inherit;
  font: inherit;
  display: flex;
  flex: none;
  align-items: center;
  justify-content: center;
  white-space: nowrap;
}

a { color: inherit; text-decoration: none; }
svg { display: block; flex: none; }
.defs { position: absolute; width: 0; height: 0; }

/* title bar */
.titlebar {
  position: relative;
  display: flex;
  height: 25px;
  background: #5e2115;
  border-bottom: 1px solid #222;
}

.app-button {
  position: absolute;
  left: 0;
  top: 0;
  z-index: 2;
  width: 41px;
  height: 41px;
  border: 1px solid #111;
  background: linear-gradient(#c4c4c4, #8e8e8e 50%, #666);
}

.quick {
  display: flex;
  width: 303px;
  padding-left: 46px;
  background: #9e9e9e;
  border: 1px solid #b0b0b0;
  border-left: 0;
}

.q { width: 24px; }
.c { width: 12px; color: #eee; }
.c.last { width: 16px; }

.title {
  flex: 1;
  display: flex;
  justify-content: center;
  gap: 12px;
  padding-top: 4px;
  color: #141414;
  white-space: nowrap;
}

.info {
  display: flex;
  width: 447px;
  margin-right: 24px;
  background: #9e9e9e;
  border: 1px solid #b0b0b0;
}

.info-arrow { width: 13px; }

.search {
  flex: none;
  width: 180px;
  margin: 0 1px 0 0;
  padding: 0 3px 2px;
  border: 1px solid #333;
  background: #777;
  font: italic 11px "Open Sans", "Noto Sans", sans-serif;
}

.search::placeholder { color: #d8d8d8; opacity: 1; }

.signin {
  width: 90px;
  justify-content: space-between;
  margin-right: 7px;
}

.help { margin-left: 10px; }
.help-mark { font: bold 12px "Open Sans", sans-serif; fill: #333a75; }
.win { display: flex; padding-bottom: 4px; }
.win button { width: 46px; }

/* ribbon tab row */
.menu {
  display: flex;
  height: 20px;
  padding-left: 46px;
  background: #535353;
  border-bottom: 1px solid #2e2e2e;
  color: #d4d4d4;
}

.menu a { padding: 2px 8px 0 9px; white-space: nowrap; }

.menu a.active {
  margin-top: 2px;
  padding-top: 0;
  height: 18px;
  border: 1px solid #333;
  border-bottom: 0;
  background: linear-gradient(#6e6e6e, #5c5c5c);
  color: #fff;
}

.menu-toggle { margin-left: 20px; }

/* ribbon */
.ribbon {
  display: flex;
  height: 99px;
  background: linear-gradient(#4f4f4f, #363636);
  border-bottom: 1px solid #909090;
  padding-bottom: 1px;
}

.panel {
  flex: none;
  display: flex;
  flex-direction: column;
  background: #5c5c5c;
  border-right: 2px solid #404040;
  padding-left: 1px;
}

.p-block { width: 114px; padding-left: 2px; }
.p-def { width: 215px; }
.p-ref { width: 282px; padding-left: 2px; }
.p-pc { width: 102px; }
.p-imp { width: 270px; }
.p-data { width: 145px; }
.p-link { width: 196px; }
.p-loc { width: 69px; border-right: 0; }

.tools { display: flex; height: 79px; }

.panel h2 {
  position: relative;
  flex: 1;
  margin: 0;
  padding-bottom: 1px;
  display: flex;
  align-items: center;
  justify-content: center;
  gap: 7px;
  background: linear-gradient(#454545, #555);
  font-size: 12px;
  font-weight: 400;
  line-height: 15px;
}

.tri {
  border: 4px solid transparent;
  border-top-color: #fff;
  border-bottom: 0;
}

.launcher { position: absolute; right: 6px; top: 7px; }

.big {
  position: relative;
  flex-direction: column;
  justify-content: flex-start;
  gap: 4px;
  padding-top: 7px;
}

.big span { text-align: center; }

.drop {
  border: 2px solid transparent;
  border-top: 3px solid #fff;
  border-bottom: 0;
}

.big .drop { position: absolute; right: 4px; bottom: 19px; }

.pressed {
  height: 72px;
  margin-top: 4px;
  padding-top: 2px;
  border: 1px solid #2c2c2c;
  background: linear-gradient(#868686, #5c5c5c 60%, #707070);
}

.w32 { width: 32px; }
.w38 { width: 38px; }
.w40 { width: 40px; }
.w41 { width: 41px; }
.w42 { width: 42px; }
.w52 { width: 52px; }
.w54 { width: 54px; }
.w58 { width: 58px; }
.w60 { width: 60px; }
.w64 { width: 64px; }
.w66 { width: 66px; }
.w68 { width: 68px; }
.end { margin-left: auto; }

.rule { width: 1px; height: 74px; margin: 3px 10px 0 4px; background: #909090; }

.list {
  display: flex;
  flex-direction: column;
  gap: 8px;
  padding-top: 7px;
}

.list button { height: 16px; gap: 5px; justify-content: flex-start; }
.pad4 { padding-left: 4px; }

.ic-t { font: 6px "Roboto", sans-serif; fill: #eee; }
.ic-a { font: bold 9px "Roboto", sans-serif; fill: #6fbcf3; }
.ic-x { font: italic 8px "Liberation Serif", serif; fill: #6fbcf3; }
.ic-pdf { font: 11px "Open Sans", sans-serif; fill: #fff; }

/* drawing tabs */
.files {
  display: flex;
  height: 29px;
  padding: 3px 0 0 15px;
  border-bottom: 4px solid #5f5f5f;
  background: #363636;
}

.files a {
  position: relative;
  flex: none;
  width: 133px;
  height: 22px;
  margin-right: -10px;
  padding: 4px 15px 0 17px;
  display: flex;
  justify-content: space-between;
  background: linear-gradient(#5e5e5e, #4d4d4d);
  color: #b4b4b4;
  clip-path: path("M0 22C5 20 6 10 9 4Q11 0 17 0H118Q124 0 126 4C129 10 129 18 133 22Z");
}

.files a.current { background: linear-gradient(#8c8c8c, #5f5f5f); color: #fff; }
.files b { font: 10px/14px "DejaVu Sans", sans-serif; color: #2b2b2b; }
.new-file { margin: 2px 0 0 14px; height: 20px; }
.overflow { margin: 0 auto 0 9px; height: 18px; }

/* work area */
.workspace { flex: 1; display: flex; min-height: 600px; }

.viewport {
  position: relative;
  flex: 1;
  overflow: hidden;
  background: #212830;
}

.edge { width: 7px; background: #dce6f2; }
.drawing { position: absolute; left: 0; top: 0; }

.red, .green, .mag, .yel, .gray, .white { fill: none; stroke-width: 3; }
.red { stroke: #f00000; stroke-width: 4; }
.green { stroke: #00d800; stroke-width: 5; }
.mag { stroke: #e000e0; stroke-width: 4; stroke-dasharray: 4 2; }
.yel { stroke: #f0f000; }
.gray { stroke: #858585; }
.white { stroke: #e4e4e4; stroke-width: 4; }
.bars { stroke: #fff; stroke-width: 8; fill: none; }
.cad { font: 21px "Roboto Condensed", "Roboto", sans-serif; fill: #fff; stroke: #fff; stroke-width: 1; }
.words { font-size: 18px; }
.cad-title { font: 39px "Roboto Condensed", "Roboto", sans-serif; fill: #00e000; }
.cad-title path { stroke: #00e000; stroke-width: 4; }
.axis { font: 60px "Roboto Condensed", "Roboto", sans-serif; fill: #00e000; text-anchor: middle; }
.sheet-title { font: 11px "Roboto Condensed", "Roboto", sans-serif; fill: #f0f000; text-anchor: middle; }

.view-label { position: absolute; left: 3px; top: 6px; }

.doc-win { position: absolute; right: 11px; top: 10px; display: flex; gap: 10px; }

.cube {
  position: absolute;
  right: 17px;
  top: 34px;
  display: flex;
  flex-direction: column;
  align-items: center;
  gap: 15px;
}

.top { font: bold 12px "Open Sans", sans-serif; fill: #4b5056; text-anchor: middle; }
.compass { font: bold 22px "Liberation Sans", sans-serif; fill: #aeb1b4; text-anchor: middle; }

.wcs {
  width: 48px;
  height: 18px;
  gap: 6px;
  border: 1px solid #777;
  border-radius: 4px;
  background: #9b9c9e;
  color: #4a4f55;
  font: 11px "Liberation Sans", sans-serif;
}

.navbar {
  position: absolute;
  right: 4px;
  top: 236px;
  border-radius: 4px;
  background: #5f6062;
}

.command {
  position: absolute;
  left: 7px;
  right: 0;
  bottom: 0;
  width: 787px;
  margin: 0 auto;
  font: 12px/15px "DejaVu Sans Mono", monospace;
}

.history {
  display: flex;
  flex-direction: column;
  align-items: flex-start;
  gap: 5px;
  padding: 0 0 2px 61px;
}

.history p {
  margin: 0;
  padding: 0 2px;
  border-radius: 3px;
  background: rgba(110, 110, 110, .8);
  white-space: nowrap;
}

.history .dim { background: rgba(100, 104, 104, .7); color: #c8c8c8; }

.cmdline { display: flex; height: 27px; background: #bcbec0; border-radius: 3px; overflow: hidden; border: 1px solid #777; }
.grip { width: 55px; background: linear-gradient(#6a6a6a, #3c3c3c); }
.prompt { display: flex; align-items: center; padding: 0 8px 0 5px; }

.cmdline input {
  flex: 1;
  border: 0;
  padding: 0;
  background: none;
  font: italic 12px "DejaVu Sans Mono", monospace;
}

.cmdline input::placeholder { color: #666; opacity: 1; }
.cmdline button { width: 16px; }

/* status bar */
.status {
  display: flex;
  height: 25px;
  justify-content: space-between;
  background: #383838;
  border-top: 1px solid #666;
}

.layouts { display: flex; height: 17px; padding-left: 9px; }

.layouts a {
  width: 65px;
  height: 17px;
  margin-right: -5px;
  text-align: center;
  background: #585858;
  color: #b4b4b4;
  clip-path: path("M0 0H65Q61 2 59 10Q57 17 53 17H11Q7 17 5 10Q3 2 0 0Z");
}

.layouts a + a { width: 70px; margin-right: 0; clip-path: path("M0 0H70Q66 2 64 10Q62 17 58 17H11Q7 17 5 10Q3 2 0 0Z"); }
.layouts a.current { background: #858585; color: #fff; font-weight: 700; }

.toggles { display: flex; padding-left: 1px; background: #7a7a7a; gap: 2px; }
.cell { display: flex; padding: 0 1px; margin-top: 1px; background: #4d4d4d; }
.model { width: 46px; font-weight: 600; }
.t { width: 22px; height: 22px; }
.t + .t { margin-left: 2px; }
.on { background: #5a8ec4; }
.k { width: 16px; }
.scale { width: 34px; gap: 4px; }
```
